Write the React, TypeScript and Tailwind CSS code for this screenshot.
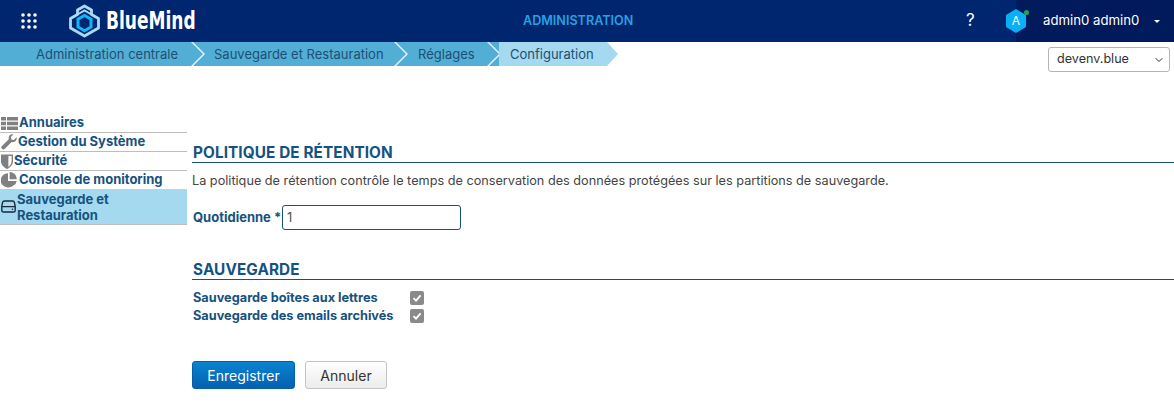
import { ChevronDown } from 'lucide-react'

const font = "[font-family:Inter,'Liberation_Sans',sans-serif]"

const crumbs = [
  { label: 'Administration centrale', cls: 'pl-[36px] w-[191px]' },
  { label: 'Sauvegarde et Restauration', cls: 'pl-[9px] w-[189px]' },
  { label: 'Réglages', cls: 'pl-[10px] w-[79px]' },
]

function Chevron() {
  return (
    <svg width="14" height="24" viewBox="0 0 14 24" className="shrink-0">
      <path d="M0 0 L12 12 L0 24 L2 24 L14 12 L2 0 Z" fill="#ffffff" opacity="0.85" />
    </svg>
  )
}

function Logo() {
  return (
    <svg width="32" height="34" viewBox="0 0 32 34" className="shrink-0">
      {/* three pale lobes behind the cyan hexagon */}
      <path d="M15.5 2 L22.5 6 V10.5 L29.5 14.5 V24 L15.5 32 L1.5 24 V14.5 L8.5 10.5 V6 Z" fill="none" stroke="#a8daf2" strokeWidth="2.8" strokeLinejoin="round" />
      <path d="M8.5 10.5 L15.5 6.5 L22.5 10.5" fill="none" stroke="#a8daf2" strokeWidth="2" />
      <path d="M15.5 11.5 L22 15.2 V23 L15.5 26.8 L9 23 V15.2 Z" fill="none" stroke="#12b5f6" strokeWidth="3" />
    </svg>
  )
}

function GridDots() {
  const dots = [0, 1, 2]
  return (
    <svg width="16" height="16" viewBox="0 0 16 16">
      {dots.map(r => dots.map(c => <circle key={`${r}-${c}`} cx={2 + c * 6} cy={2 + r * 6} r="1.8" fill="#fff" />))}
    </svg>
  )
}

function SectionTitle({ children }: { children: string }) {
  return <h2 className="text-[15.3px] leading-[17px] tracking-[0.1px] pl-[1px] font-bold text-[#16527f] border-b border-[#16527f] pb-[1px]">{children}</h2>
}

function Check() {
  return (
    <span className="w-[14px] h-[14px] rounded-[2px] bg-[#8a8a8a] flex items-center justify-center">
      <svg width="10" height="10" viewBox="0 0 10 10">
        <path d="M1.5 5.2 L4 7.6 L8.6 2.4" fill="none" stroke="#fff" strokeWidth="1.8" />
      </svg>
    </span>
  )
}

const menuIcons = {
  list: (
    <svg width="17" height="13" viewBox="0 0 17 13" className="shrink-0">
      <path d="M0 0h5v3.6H0zM6 0h11v3.6H6zM0 4.7h5v3.6H0zM6 4.7h11v3.6H6zM0 9.4h5V13H0zM6 9.4h11V13H6z" fill="#808080" />
    </svg>
  ),
  wrench: (
    <svg width="16" height="16" viewBox="0 0 16 16" className="shrink-0">
      <path d="M15.6 3.2 L12.8 6 L10.4 5.4 L9.8 3 L12.6 .3 C9.4 -.5 7 2 7.8 5.2 L.7 12.2 C-.6 14 1.7 16.4 3.6 15 L10.6 8 C13.8 8.9 16.4 6.4 15.6 3.2 Z" fill="#808080" />
    </svg>
  ),
  shield: (
    <svg width="12" height="15" viewBox="0 0 12 15" className="shrink-0">
      <path d="M0 .5 H12 V7 C12 11 9 13.5 6 15 C3 13.5 0 11 0 7 Z" fill="#808080" />
      <path d="M7.4 2 H10.6 V7 C10.6 9.6 9.2 11.6 7.4 12.9 Z" fill="#fff" />
    </svg>
  ),
  pie: (
    <svg width="16" height="16" viewBox="0 0 16 16" className="shrink-0">
      <path d="M7 1.2 V9 H14.7 A7.5 7.2 0 1 1 7 1.2 Z" fill="#808080" />
      <path d="M8.6 0 A7.2 7.2 0 0 1 15.8 7.2 H8.6 Z" fill="#808080" />
      <path d="M9.6 9 H15.6 A7.5 7.5 0 0 1 13.8 13 Z" fill="#808080" />
    </svg>
  ),
  drive: (
    <svg width="15" height="13" viewBox="0 0 15 13" className="shrink-0">
      <path d="M3.4 1 H11.6 A2 2 0 0 1 13.4 2.4 L14.2 6.4 V10.4 A1.6 1.6 0 0 1 12.6 12 H2.4 A1.6 1.6 0 0 1 .8 10.4 V6.4 L1.6 2.4 A2 2 0 0 1 3.4 1 Z M.8 6.6 H14.2" fill="none" stroke="#1a2a3a" strokeWidth="1.4" />
      <circle cx="11.5" cy="9.3" r=".8" fill="#1a2a3a" />
    </svg>
  ),
}

const menu = [
  { label: 'Annuaires', icon: menuIcons.list, gap: 'gap-[1px] pl-[1px]' },
  { label: 'Gestion du Système', icon: menuIcons.wrench, gap: 'gap-[1px] pl-[1px]' },
  { label: 'Sécurité', icon: menuIcons.shield, gap: 'gap-[1px] pl-[1px]' },
  { label: 'Console de monitoring', icon: menuIcons.pie, gap: 'gap-[2px] pl-[1px]' },
]

export default function App() {
  return (
    <div className={`w-[1174px] h-[406px] overflow-hidden bg-white ${font}`}>
      <header className="h-[42px] flex bg-[#00266f] text-white">
        <div className="w-[1016px] flex items-center relative">
          <div className="ml-[21px] flex"><GridDots /></div>
          <div className="ml-[32px] flex items-center gap-[5px]">
            <Logo />
            <span className="inline-block origin-left scale-x-[0.71] text-[24px] font-bold leading-none [font-family:'DejaVu_Sans',sans-serif]">BlueMind</span>
          </div>
          <span className="absolute left-[523px] text-[12.6px] font-semibold text-[#2a9fe0]">ADMINISTRATION</span>
          <span className="absolute left-[966px] text-[17px]">?</span>
        </div>
        <div className="flex-1 bg-[#001a5c] flex items-center relative">
          <div className="absolute -left-[10px] top-[9px] w-[20px] h-[24px] bg-[#0ab0f5] [clip-path:polygon(50%_0,100%_25%,100%_75%,50%_100%,0_75%,0_25%)] flex items-center justify-center text-[12px]">A</div>
          <span className="absolute left-[8px] top-[10px] w-[5px] h-[5px] rounded-full bg-[#2e9e5b]" />
          <span className="ml-[27px] text-[13.2px]">admin0 admin0</span>
          <span className="ml-[15px] w-0 h-0 border-x-[3px] border-x-transparent border-t-[3px] border-t-white" />
        </div>
      </header>

      <div className="h-[34px] flex items-start justify-between">
        <nav className="flex h-[24px] text-[13px] leading-[24px] text-[#1f4e75]">
          {crumbs.map(c => (
            <div key={c.label} className="flex bg-[#52aed5]">
              <span className={`block whitespace-nowrap ${c.cls}`}>{c.label}</span>
              <Chevron />
            </div>
          ))}
          <div className="bg-[#a4d9ef] w-[108px] pl-[11px] -ml-[2px]">Configuration</div>
          <svg width="11" height="24" viewBox="0 0 11 24"><path d="M0 0 L11 12 L0 24 Z" fill="#a4d9ef" /></svg>
        </nav>
        <div className="mt-[5px] mr-[4px] w-[122px] h-[25px] border border-[#b5b5b5] rounded-[3px] flex items-center justify-between pl-[8px] pr-[4px] text-[12.6px] text-[#333]">
          devenv.blue
          <ChevronDown size={12} strokeWidth={2} />
        </div>
      </div>

      <div className="flex">
        <aside className="w-[187px] shrink-0 pt-[38px] text-[13px] font-bold text-[#16527f]">
          {menu.map((m, i) => (
            <div key={m.label} className={`h-[19px] flex items-center border-b ${i === 3 ? 'border-transparent' : 'border-[#bdbdbd]'} ${m.gap}`}>
              {m.icon}
              <span>{m.label}</span>
            </div>
          ))}
          <div className="h-[36px] -mt-[1px] flex items-center gap-[1px] pl-[1px] bg-[#a4d9ef] border-b border-[#bdbdbd] leading-[16px]">
            {menuIcons.drive}
            <span>Sauvegarde et<br />Restauration</span>
          </div>
        </aside>

        <main className="flex-1 pl-[5px] pt-[68px]">
          <SectionTitle>POLITIQUE DE RÉTENTION</SectionTitle>
          <p className="mt-[9px] text-[12.7px] leading-[18px] text-[#444]">La politique de rétention contrôle le temps de conservation des données protégées sur les partitions de sauvegarde.</p>

          <div className="mt-[15px] flex items-center pl-[1px]">
            <label className="w-[89px] text-[13px] font-bold text-[#16527f] whitespace-nowrap">Quotidienne *</label>
            <div className="w-[179px] h-[25px] border border-[#16527f] rounded-[3px] pl-[4px] text-[13px] leading-[23px] text-[#555]">1</div>
          </div>

          <div className="mt-[31px]"><SectionTitle>SAUVEGARDE</SectionTitle></div>
          <div className="mt-[9px] text-[12.75px] font-bold text-[#16527f] pl-[1px]">
            <div className="h-[18px] flex items-center">
              <span className="w-[217px] whitespace-nowrap">Sauvegarde boîtes aux lettres</span>
              <Check />
            </div>
            <div className="h-[18px] flex items-center">
              <span className="w-[217px] whitespace-nowrap">Sauvegarde des emails archivés</span>
              <Check />
            </div>
          </div>

          <div className="mt-[36px] flex gap-[10px] text-[14px]">
            <button className="w-[103px] h-[28px] rounded-[3px] text-white bg-gradient-to-b from-[#0a84d0] to-[#0560b0] border border-[#0560a8]">Enregistrer</button>
            <button className="w-[82px] h-[28px] rounded-[3px] text-[#333] bg-gradient-to-b from-white to-[#ececec] border border-[#c4c4c4]">Annuler</button>
          </div>
        </main>
      </div>
    </div>
  )
}
